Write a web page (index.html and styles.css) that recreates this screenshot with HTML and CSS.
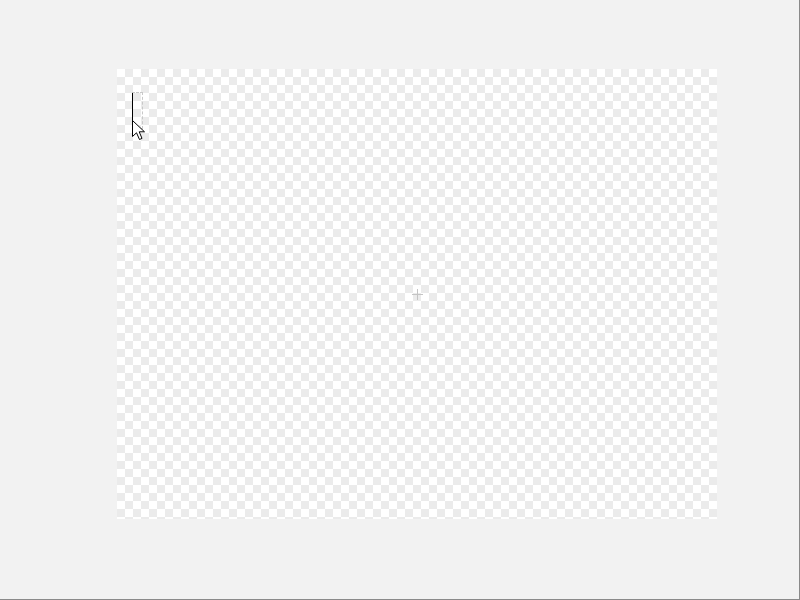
FILE: index.html
```html
<!DOCTYPE html>
<html>
<head>
<meta charset="utf-8">
<link rel="stylesheet" href="styles.css">
</head>
<body>
<div class="window">
  <div class="canvas">
    <div class="text-box">
      <div class="caret"></div>
    </div>
    <svg class="pointer" width="14" height="22" viewBox="0 0 14 22">
      <path d="M0.5 0.5 L0.5 16.5 L4.5 12.8 L7.5 19.5 L10 18.4 L7.2 11.8 L12.5 11.8 Z" fill="#fff" stroke="#000" stroke-width="1" stroke-linejoin="miter"/>
    </svg>
    <svg class="cross" width="11" height="11" viewBox="0 0 11 11">
      <path d="M5.5 0 V11 M0 5.5 H11" stroke="#c4c4c4" stroke-width="1"/>
    </svg>
  </div>
</div>
</body>
</html>
```
FILE: styles.css
```css
html, body {
  margin: 0;
  padding: 0;
  background: #f2f2f2;
}
.window {
  box-sizing: border-box;
  border-right: 1px solid #8a8a8a;
  border-bottom: 1px solid #8a8a8a;
  padding: 69px 0 0 117px;
  width: 800px;
  height: 600px;
}
.canvas {
  position: relative;
  width: 600px;
  height: 450px;
  background-color: #ffffff;
  background-image: conic-gradient(#ebebeb 25%, #ffffff 0 50%, #ebebeb 0 75%, #ffffff 0);
  background-size: 16px 16px;
}
.text-box {
  position: absolute;
  left: 15px;
  top: 23px;
  width: 10px;
  height: 35px;
  border: 1px dashed #c8c8c8;
  border-left: none;
}
.caret {
  width: 1px;
  height: 36px;
  background: #000;
}
.pointer {
  position: absolute;
  left: 15px;
  top: 51px;
  display: block;
}
.cross {
  position: absolute;
  left: 295px;
  top: 220px;
  display: block;
}
```
